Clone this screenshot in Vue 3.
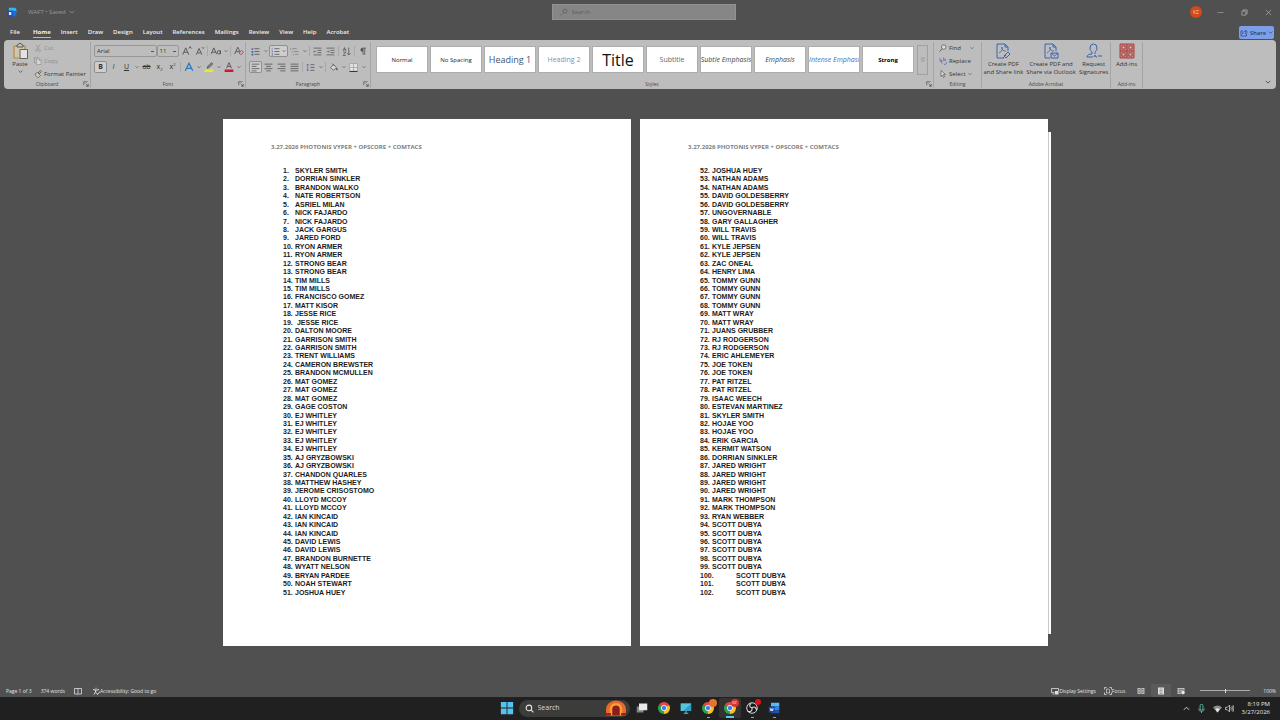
<template>
    <div class="desktop">
        <header class="title-bar">
            <div class="title-left">
                <Icon name="word" :size="10" />
                <span>WAFT • Saved</span>
                <Icon name="caret" :size="6" />
            </div>
            <label class="title-search">
                <Icon name="search" :size="8" />
                <input type="text" placeholder="Search" aria-label="Search document" />
            </label>
            <div class="title-right">
                <span class="avatar">KZ</span>
                <button v-for="w in ['minimize', 'restore', 'close']" :key="w" class="window-button" :aria-label="w">
                    <Icon :name="w" :size="7" />
                </button>
            </div>
        </header>

        <nav class="tabs">
            <a v-for="tab in tabs" :key="tab" href="#" :class="{ active: tab === 'Home' }">{{ tab }}</a>
            <button class="share"><Icon name="share" :size="8" />Share<Icon name="caret" :size="5" /></button>
        </nav>

        <section class="ribbon">
            <div class="group clipboard">
                <div class="group-body">
                    <button class="big paste">
                        <Icon name="paste" :size="16" />
                        <span>Paste</span>
                        <Icon name="caret" :size="5" />
                    </button>
                    <div class="stack">
                        <button class="line disabled"><Icon name="cut" :size="8" />Cut</button>
                        <button class="line disabled"><Icon name="copy" :size="8" />Copy</button>
                        <button class="line"><Icon name="painter" :size="8" />Format Painter</button>
                    </div>
                </div>
                <div class="group-label">Clipboard<Icon name="launcher" :size="6" /></div>
            </div>

            <div class="group font">
                <div class="group-body tool-rows">
                    <div class="tool-row">
                        <select class="font-name" aria-label="Font"><option>Arial</option></select>
                        <select class="font-size" aria-label="Font size"><option>11</option></select>
                        <component :is="t === '|' ? 'i' : 'button'" v-for="(t, i) in fontRow" :key="i" :class="toolClass(t)">
                            <Icon v-if="t !== '|'" :name="t" :size="t === 'caret' ? 4 : 10" />
                        </component>
                    </div>
                    <div class="tool-row">
                        <component :is="t === '|' ? 'i' : 'button'" v-for="(t, i) in formatRow" :key="i" :class="toolClass(t)">
                            <b v-if="t === 'B'">B</b>
                            <em v-else-if="t === 'I'">I</em>
                            <u v-else-if="t === 'U'">U</u>
                            <s v-else-if="t === 'ab'">ab</s>
                            <span v-else-if="t === 'sub'">x<sub>2</sub></span>
                            <span v-else-if="t === 'sup'">x<sup>2</sup></span>
                            <Icon v-else-if="t !== '|'" :name="t" :size="t === 'caret' ? 4 : 10" />
                        </component>
                    </div>
                </div>
                <div class="group-label">Font<Icon name="launcher" :size="6" /></div>
            </div>

            <div class="group paragraph">
                <div class="group-body tool-rows">
                    <div v-for="(row, r) in paragraphRows" :key="r" class="tool-row">
                        <component :is="t === '|' ? 'i' : 'button'" v-for="(t, i) in row" :key="i" :class="toolClass(t)">
                            <Icon v-if="t !== '|'" :name="t" :size="t === 'caret' ? 4 : 9" />
                            <Icon v-if="t === 'numbers'" name="caret" :size="4" />
                        </component>
                    </div>
                </div>
                <div class="group-label">Paragraph<Icon name="launcher" :size="6" /></div>
            </div>

            <div class="group styles">
                <div class="group-body gallery">
                    <button v-for="s in styles" :key="s.name" class="tile" :class="s.kind">{{ s.name }}</button>
                    <button class="more" aria-label="More styles"><Icon name="more" :size="6" /></button>
                </div>
                <div class="group-label">Styles<Icon name="launcher" :size="6" /></div>
            </div>

            <div class="group editing">
                <div class="group-body">
                    <div class="stack">
                        <button class="line"><Icon name="find" :size="8" />Find<Icon class="far" name="caret" :size="4" /></button>
                        <button class="line"><Icon name="replace" :size="8" />Replace</button>
                        <button class="line"><Icon name="select" :size="8" />Select<Icon name="caret" :size="4" /></button>
                    </div>
                </div>
                <div class="group-label">Editing</div>
            </div>

            <div class="group acrobat">
                <div class="group-body">
                    <button class="big"><Icon name="pdfLink" :size="16" /><span>Create PDF<br />and Share link</span></button>
                    <button class="big"><Icon name="pdfMail" :size="16" /><span>Create PDF and<br />Share via Outlook</span></button>
                    <button class="big"><Icon name="sign" :size="16" /><span>Request<br />Signatures</span></button>
                </div>
                <div class="group-label">Adobe Acrobat</div>
            </div>

            <div class="group addins">
                <div class="group-body">
                    <button class="big"><Icon name="addins" :size="16" /><span>Add-ins</span></button>
                </div>
                <div class="group-label">Add-ins</div>
            </div>
            <button class="collapse" aria-label="Collapse ribbon"><Icon name="caret" :size="6" /></button>
        </section>

        <main class="canvas">
            <article v-for="page in pages" :key="page.start" class="page">
                <h1>3.27.2026 PHOTONIS VYPER + OPSCORE + COMTACS</h1>
                <ol>
                    <li v-for="(name, i) in page.names" :key="i">
                        <span class="number" :class="{ wide: page.start + i > 99 }">{{ page.start + i }}.</span>
                        <span>{{ name }}</span>
                    </li>
                </ol>
            </article>
            <div class="page-edge"></div>
        </main>

        <footer class="status-bar">
            <span class="page-count">Page 1 of 3</span>
            <span class="word-count">374 words</span>
            <Icon class="book" name="book" :size="8" />
            <Icon name="access" :size="8" />
            <span>Accessibility: Good to go</span>
            <div class="status-right">
                <button><Icon name="display" :size="8" />Display Settings</button>
                <button class="focus"><Icon name="focus" :size="8" />Focus</button>
                <button class="view" aria-label="Read mode"><Icon name="readView" :size="8" /></button>
                <button class="view current" aria-label="Print layout"><Icon name="printView" :size="8" /></button>
                <button class="view" aria-label="Web layout"><Icon name="webView" :size="8" /></button>
                <input type="range" min="0" max="100" value="50" aria-label="Zoom" />
                <span class="zoom">100%</span>
            </div>
        </footer>

        <div class="taskbar">
            <div class="task-center">
                <button aria-label="Start"><Icon name="windows" :size="14" /></button>
                <label class="task-search">
                    <Icon name="searchWhite" :size="9" />
                    <input type="text" placeholder="Search" aria-label="Search Windows" />
                    <Icon name="arch" :size="20" />
                </label>
                <button v-for="app in apps" :key="app.id" :class="[app.state]" :aria-label="app.id">
                    <Icon :name="app.icon" :size="12" />
                    <span v-if="app.badge !== undefined" class="badge" :class="app.id">{{ app.badge }}</span>
                </button>
            </div>
            <div class="tray">
                <Icon name="up" :size="7" />
                <Icon class="mic" name="mic" :size="9" />
                <Icon name="wifi" :size="9" />
                <Icon name="volume" :size="9" />
                <time>8:19 PM<br />3/27/2026</time>
            </div>
        </div>
    </div>
</template>

<script setup>
import { h } from 'vue';

// every icon is a list of [path, stroke, fill, stroke width] on a 16 unit grid
const ink = '#484848';
const blue = '#3c62ad';
const white = '#dedede';
const chrome = [
    ['M8 8 L1.1 4 A8 8 0 0 1 14.9 4 Z', null, '#e8453c'],
    ['M8 8 L14.9 4 A8 8 0 0 1 8 16 Z', null, '#fbc116'],
    ['M8 8 L8 16 A8 8 0 0 1 1.1 4 Z', null, '#2ea24c'],
    ['M4.4 8a3.6 3.6 0 1 0 7.2 0a3.6 3.6 0 1 0 -7.2 0', '#f1f1f1', '#3f7fe8', 1.2]
];
const icons = {
    word: [
        ['M3 1h10l2 2v5H3z', null, '#35b6f2'],
        ['M5 6h10v6l-3 3H5z', null, '#1c6fe0'],
        ['M1 6h8v9H1z', null, '#1247b5'],
        ['M3 8h4v5H3z', null, '#dfe9fb']
    ],
    caret: [['M2 5l6 6l6-6', 'currentColor', null, 2]],
    search: [['M6 6a4 4 0 1 1 8 0a4 4 0 1 1-8 0M7 9l-6 6', '#565656', null, 1.3]],
    searchWhite: [['M2 7a5 5 0 1 1 10 0a5 5 0 1 1-10 0M11 11l4 4', '#e8e8e8', null, 1.8]],
    find: [['M5 6a4.5 4.5 0 1 1 9 0a4.5 4.5 0 1 1-9 0', ink, '#dddddd', 1.3], ['M6 10l-5 5', ink, null, 1.5]],
    minimize: [['M1 8h14', '#a8a8a8', null, 1.4]],
    restore: [['M2 5h9v9H2zM5 5V2h9v9h-3', '#b5b5b5', null, 1.6]],
    close: [['M2 2l12 12M14 2L2 14', '#b5b5b5', null, 1.5]],
    share: [['M6 4H2v10h11v-4M5 10c0-4 3-5 6-5V2l4 4l-4 4V7', '#28406f', null, 1.4]],
    paste: [
        ['M2 3h11v12H2z', '#b78a3a', '#d0c6ad', 1.2],
        ['M5 2h1l1-1.5h2L10 2h1v2H5z', '#5a5a5a', '#c4c4c4', 1],
        ['M8 6.5h7.5v9H8z', '#626262', '#e2e2e2', 1]
    ],
    cut: [['M4 1l6 10M12 1L6 11M3 13a2 2 0 1 1 4 0a2 2 0 1 1-4 0M9 13a2 2 0 1 1 4 0a2 2 0 1 1-4 0', '#909090', null, 1.2]],
    copy: [['M5 12H1V1h7v3', '#8d8d8d', null, 1.2], ['M5 4h6l3 3v8H5zM11 4v3h3', '#8d8d8d', '#d4d4d4', 1.2]],
    painter: [['M7 5l6 6l-4 4c-3 0-6-3-7-7z', ink, '#d1c7ad', 1.2], ['M8 6l5-5l2 2l-5 5', ink, null, 1.4]],
    launcher: [['M2 11V2h10M7 7l7 7M14 8v6H8', '#3b3b3b', null, 1.6]],
    more: [['M3 3h10M3 7l5 5l5-5', '#6c6c6c', null, 1.4]],
    growA: [['M1 14L6 3l5 11M3 10h6M11 4l2-3l2 3', ink, null, 1.3]],
    shrinkA: [['M2 14L6.500 4l4.500 10M4 11h5M11 2l2 2l2-2', ink, null, 1.3]],
    caseA: [['M0 13L4.500 3L9 13M2 10h5M15 7v6M15 10a2.500 2.700 0 1 0-5 0a2.500 2.700 0 1 0 5 0', ink, null, 1.3]],
    clear: [['M1 13L6 2l4 8M3 9h5', ink, null, 1.3], ['M8 11l4-4l3 3l-4 4z', '#9b3c62', '#d3aebb', 1.4]],
    effects: [['M2 14L8 2l6 12M5 10h6', '#2878be', null, 2]],
    highlight: [['M1 12h14v4H1z', null, '#e4ee1f'], ['M5 10l1-3l6-6l2 2l-6 6z', ink, '#8b8b8b', 1.2]],
    fontColor: [['M1 12h14v4H1z', null, '#d2172d'], ['M4 10l4-9l4 9M6 7h5', ink, null, 1.3]],
    bullets: [['M6 3h9M6 8h9M6 13h9', ink, null, 1.3], ['M1 2h3v3H1zM1 7h3v3H1zM1 12h3v3H1z', null, blue]],
    numbers: [['M6 3h9M6 8h9M6 13h9', ink, null, 1.3], ['M2 1v4M1 7h2v2H1M1 12h2v3H1', blue, null, 1]],
    levels: [['M4 3h8M7 8h8M9 13h6', '#777777', null, 1.3], ['M1 2v3M4 7v3M6 12v3', '#6479a8', null, 1]],
    outdent: [['M1 2h14M8 6h7M8 10h7M1 14h14', ink, null, 1.2], ['M6 8H1M3 6L1 8l2 2', blue, null, 1]],
    indent: [['M1 2h14M8 6h7M8 10h7M1 14h14', ink, null, 1.2], ['M1 8h5M4 6l2 2l-2 2', blue, null, 1]],
    sort: [['M2 7l2.500-6L7 7M3 5h3M2 9h5l-5 6h5', ink, null, 1.2], ['M12 1v13M9 11l3 3l3-3', ink, null, 1.3]],
    pilcrow: [['M8 8a3 3 0 0 1 0-6z', ink, ink, 1], ['M8 2h6M9 2v12M12 2v12', ink, null, 1.3]],
    alignLeft: [['M1 2h14M1 6h9M1 10h14M1 14h9', ink, null, 1.3]],
    alignCenter: [['M1 2h14M4 6h8M1 10h14M4 14h8', ink, null, 1.3]],
    alignRight: [['M1 2h14M6 6h9M1 10h14M6 14h9', ink, null, 1.3]],
    justify: [['M1 2h14M1 6h14M1 10h14M1 14h14', ink, null, 1.3]],
    spacing: [['M8 3h7M8 8h7M8 13h7', ink, null, 1.3], ['M3 2v12M1 4l2-2l2 2M1 12l2 2l2-2', blue, null, 1.2]],
    bucket: [['M3 8l5-5l5 5l-5 5zM6 1l3 4', ink, '#d8d8d8', 1.3], ['M14 9l1 3h-2z', ink, ink, 1]],
    borders: [['M1 1h14v14H1zM8 1v14M1 8h14', '#8c8c8c', '#e2e2e2', 1], ['M1 15h14', '#222222', null, 1.6]],
    replace: [['M9 1v6h4V4H9M7 9a2 2 0 1 0 0 4', '#7b5ba1', null, 1.3], ['M2 2v6h4M4 6l2 2l-2 2M10 15c4 0 5-2 5-5', blue, null, 1.3]],
    select: [['M4 1v12l3-3l2 5l2-1l-2-5h4z', ink, '#dddddd', 1.2]],
    pdfLink: [
        ['M9 15H2V1h8l3 3v4M10 1v3h3', blue, null, 1],
        ['M4 10c3-2 4-4 3-6c-1 2 1 4 4 4', blue, null, 0.8],
        ['M9 13l4-4l2 2l-4 4zM8 15l3-3', blue, null, 1]
    ],
    pdfMail: [
        ['M7 15H2V1h8l3 3v4M10 1v3h3', blue, null, 1],
        ['M4 10c3-2 4-4 3-6c-1 2 1 4 4 4', blue, null, 0.8],
        ['M8 10h7v5H8zl3.500 3L15 10', blue, null, 1]
    ],
    sign: [['M4 5a3.500 4 0 1 1 7 0c0 2-1 3-2 4v2M6 9v2c-3 0-5 1-5 3h6M4 5c0 2 1 3 2 4M8 14l1-2l1 2h1M12 13h4', blue, null, 1]],
    addins: [['M1 1h14v14H1zM8 1v14M1 8h14', '#a7433f', '#bd8380', 1], ['M3 3h3v3H3zM10 3h3v3h-3zM3 10h3v3H3zM10 10h3v3h-3z', '#a7433f', '#dccaca', 1]],
    book: [['M8 3H1v11h6l1 1l1-1h6V3zM8 3v11', white, null, 1.6]],
    access: [['M7 2.500h2M2 5l5 1h3l4-1M7 6v4l-3 5M8 10h1M9 12l2 3l5-6', white, null, 2]],
    display: [['M1 3h14v5M1 3v8h6M3 14h4', white, null, 1.6], ['M8 8h7v7H8z', null, white]],
    focus: [['M1 5V1h4M11 1h4v4M15 11v4h-4M5 15H1v-4', white, null, 1.6], ['M5 4h4l2 2v6H5z', white, null, 1.4]],
    readView: [['M1 2h14v12H1z', null, '#bdbdbd'], ['M8 2v12M3 5h3M3 8h3M3 11h3M10 5h3M10 8h3M10 11h3', '#505050', null, 1.2]],
    printView: [['M2 1h12v14H2z', null, '#dddddd'], ['M5 4h6M5 7h6M5 10h6M5 13h6', '#777777', null, 1.2]],
    webView: [['M1 2h14v12H1z', null, '#bdbdbd'], ['M3 5h10M3 8h5M3 11h4', '#505050', null, 1.2], ['M8 11a4 4 0 1 1 8 0a4 4 0 1 1-8 0', '#505050', '#f0f0f0', 1]],
    windows: [['M1 1h6.500v6.500H1zM8.500 1H15v6.500H8.500zM1 8.500h6.500V15H1zM8.500 8.500H15V15H8.500z', null, '#55c3f0']],
    arch: [
        ['M0 14V9a8 7 0 0 1 16 0v5z', null, '#e9692c'],
        ['M3 14V9a5 5 0 0 1 10 0v5z', null, '#f6a13d'],
        ['M5 14V9a3 3 0 0 1 6 0v5z', null, '#8e1c19'],
        ['M0 12h4v2H0zM12 12h4v2h-4z', null, '#a91f1b']
    ],
    taskView: [['M1 6h9v8H1z', null, '#858585'], ['M4 2h11v9H4z', null, '#e9e9e9']],
    monitor: [['M1 2h14v10H1z', null, '#2f9fc7'], ['M1 2h14L4 12H1z', null, '#56c5dc'], ['M8 12v3M5 15h6', '#8dc6d5', null, 1.2]],
    chrome,
    obs: [
        ['M1 8a7 7 0 1 1 14 0a7 7 0 1 1-14 0', '#dcdcdc', '#191919', 1.3],
        ['M8 8c-4-1-4-5-1-6M8 8c3-3 6 0 6 3M8 8c1 4-3 6-6 4', '#dcdcdc', null, 1.5]
    ],
    wordApp: [
        ['M4 1h11v5H4z', null, '#58b9f4'],
        ['M4 6h11v5H4z', null, '#2e86e6'],
        ['M4 11h11v4H4z', null, '#1b54bd'],
        ['M1 6h8v8H1z', null, '#1746a8'],
        ['M3 8l1 4l1-3l1 3l1-4', '#ffffff', null, 1]
    ],
    up: [['M2 11l6-6l6 6', '#e8e8e8', null, 2]],
    mic: [['M5.500 3a2.500 2.500 0 0 1 5 0v5a2.500 2.500 0 0 1-5 0zM3 8a5 5 0 0 0 10 0M8 13v3', '#61c9b6', null, 1.5]],
    wifi: [['M0 6a11 11 0 0 1 16 0L8 15z', null, '#8d8d8d'], ['M4 9.500a6 6 0 0 1 8 0L8 15z', null, '#e5e5e5']],
    volume: [['M1 6h3l4-4v12l-4-4H1z', '#e5e5e5', null, 1.3], ['M10 6q2 2 0 4M12 4q3 4 0 8M14 2q4 6 0 12', '#e5e5e5', null, 1.3]]
};

const Icon = (props) =>
    h(
        'svg',
        { viewBox: '0 0 16 16', width: props.size, height: props.size, 'aria-hidden': true },
        icons[props.name].map(([d, stroke, fill, width]) =>
            h('path', { d, stroke: stroke || 'none', fill: fill || 'none', 'stroke-width': width || 1 })
        )
    );
Icon.props = ['name', 'size'];

const tabs = ['File', 'Home', 'Insert', 'Draw', 'Design', 'Layout', 'References', 'Mailings', 'Review', 'View', 'Help', 'Acrobat'];

const fontRow = ['growA', 'shrinkA', '|', 'caseA', 'caret', '|', 'clear'];
const formatRow = ['B', 'I', 'U', 'caret', 'ab', 'sub', 'sup', '|', 'effects', 'caret', 'highlight', 'caret', 'fontColor', 'caret'];
const paragraphRows = [
    ['bullets', 'caret', 'numbers', 'levels', 'caret', '|', 'outdent', 'indent', '|', 'sort', '|', 'pilcrow'],
    ['alignLeft', 'alignCenter', 'alignRight', 'justify', '|', 'spacing', 'caret', '|', 'bucket', 'caret', 'borders', 'caret']
];

const toolClass = (t) => {
    if (t === '|') return 'divider';
    if (t === 'caret') return 'tool-caret';
    return ['tool', { pressed: ['B', 'numbers', 'alignLeft'].includes(t), split: t === 'numbers' }];
};

const styles = [
    { name: 'Normal', kind: 'plain' },
    { name: 'No Spacing', kind: 'plain' },
    { name: 'Heading 1', kind: 'heading-1' },
    { name: 'Heading 2', kind: 'heading-2' },
    { name: 'Title', kind: 'title' },
    { name: 'Subtitle', kind: 'subtitle' },
    { name: 'Subtle Emphasis', kind: 'emphasis' },
    { name: 'Emphasis', kind: 'emphasis' },
    { name: 'Intense Emphasis', kind: 'intense' },
    { name: 'Strong', kind: 'strong' }
];

const repeat = (name, times) => Array(times).fill(name);

const pages = [
    {
        start: 1,
        names: [
            'SKYLER SMITH', 'DORRIAN SINKLER', 'BRANDON WALKO', 'NATE ROBERTSON', 'ASRIEL MILAN',
            ...repeat('NICK FAJARDO', 2), 'JACK GARGUS', 'JARED FORD', ...repeat('RYON ARMER', 2),
            ...repeat('STRONG BEAR', 2), ...repeat('TIM MILLS', 2), 'FRANCISCO GOMEZ', 'MATT KISOR',
            'JESSE RICE', ' JESSE RICE', 'DALTON MOORE', ...repeat('GARRISON SMITH', 2), 'TRENT WILLIAMS',
            'CAMERON BREWSTER', 'BRANDON MCMULLEN', ...repeat('MAT GOMEZ', 3), 'GAGE COSTON',
            ...repeat('EJ WHITLEY', 5), ...repeat('AJ GRYZBOWSKI', 2), 'CHANDON QUARLES', 'MATTHEW HASHEY',
            'JEROME CRISOSTOMO', ...repeat('LLOYD MCCOY', 2), ...repeat('IAN KINCAID', 3),
            ...repeat('DAVID LEWIS', 2), 'BRANDON BURNETTE', 'WYATT NELSON', 'BRYAN PARDEE', 'NOAH STEWART',
            'JOSHUA HUEY'
        ]
    },
    {
        start: 52,
        names: [
            'JOSHUA HUEY', ...repeat('NATHAN ADAMS', 2), ...repeat('DAVID GOLDESBERRY', 2), 'UNGOVERNABLE',
            'GARY GALLAGHER', ...repeat('WILL TRAVIS', 2), ...repeat('KYLE JEPSEN', 2), 'ZAC ONEAL',
            'HENRY LIMA', ...repeat('TOMMY GUNN', 4), ...repeat('MATT WRAY', 2), 'JUANS GRUBBER',
            ...repeat('RJ RODGERSON', 2), 'ERIC AHLEMEYER', ...repeat('JOE TOKEN', 2), ...repeat('PAT RITZEL', 2),
            'ISAAC WEECH', 'ESTEVAN MARTINEZ', 'SKYLER SMITH', ...repeat('HOJAE YOO', 2), 'ERIK GARCIA',
            'KERMIT WATSON', 'DORRIAN SINKLER', ...repeat('JARED WRIGHT', 4), ...repeat('MARK THOMPSON', 2),
            'RYAN WEBBER', ...repeat('SCOTT DUBYA', 9)
        ]
    }
];

const apps = [
    { id: 'task-view', icon: 'taskView' },
    { id: 'chrome', icon: 'chrome' },
    { id: 'remote', icon: 'monitor' },
    { id: 'chrome-work', icon: 'chrome', badge: '', state: 'open' },
    { id: 'chrome-kz', icon: 'chrome', badge: 'KZ', state: 'focused' },
    { id: 'obs', icon: 'obs', badge: '', state: 'open' },
    { id: 'word', icon: 'wordApp', state: 'open' }
];
</script>

<style>
body {
    background: #505050;
}
</style>

<style scoped>
.desktop {
    display: flex;
    flex-direction: column;
    min-height: 100vh;
    background: #505050;
    font: 6px/8px "Open Sans", "Noto Sans", sans-serif;
    color: #333333;
}

.desktop * {
    box-sizing: border-box;
}

button, input, select {
    margin: 0;
    padding: 0;
    border: 0;
    background: none;
    color: inherit;
    font: inherit;
    appearance: none;
}

button {
    display: flex;
    align-items: center;
    justify-content: center;
    white-space: nowrap;
}

svg {
    flex: none;
}

.title-bar {
    display: grid;
    grid-template-columns: 1fr 184px 1fr;
    align-items: center;
    height: 24px;
    padding-left: 7px;
    color: #999999;
}

.title-left {
    display: flex;
    align-items: center;
    gap: 3px;
}

.title-left span {
    margin-left: 8px;
}

.title-search {
    display: flex;
    align-items: center;
    gap: 4px;
    height: 16px;
    padding: 0 7px;
    border: 1px solid #929292;
    background: #868686;
}

.title-search input {
    flex: 1;
    min-width: 0;
}

.title-search input::placeholder {
    color: #5c5c5c;
    opacity: 1;
}

.title-right {
    display: flex;
    align-items: center;
    justify-content: flex-end;
}

.avatar {
    width: 12px;
    margin-right: 6px;
    border-radius: 50%;
    background: #d04a1a;
    color: #f3c9b8;
    font-size: 5px;
    line-height: 12px;
    text-align: center;
}

.window-button {
    width: 24px;
    height: 16px;
}

.tabs {
    display: flex;
    align-items: center;
    gap: 10px;
    height: 16px;
    padding: 1px 6px 0 10px;
    color: #eeeeee;
    font-weight: 600;
}

.tabs a {
    color: inherit;
    text-decoration: none;
    line-height: 9px;
    border-bottom: 1px solid transparent;
}

.tabs .active {
    margin-left: 3px;
    border-color: #a9bbe6;
    font-weight: bold;
}

.share {
    gap: 2px;
    width: 35px;
    height: 13px;
    margin-left: auto;
    border-radius: 2px;
    background: #7d9fe8;
    color: #28406f;
}

.ribbon {
    display: flex;
    height: 49px;
    margin: 0 4px;
    border-radius: 4px;
    background: #bdbdbd;
}

.group {
    display: flex;
    flex-direction: column;
    flex: none;
    margin: 2px 0 1px;
    border-right: 1px solid #a5a5a5;
}

.group-body {
    display: flex;
    flex: 1;
}

.group-label {
    position: relative;
    color: #484848;
    font-size: 5px;
    text-align: center;
}

.group-label svg {
    position: absolute;
    right: 1px;
    top: 1px;
}

.clipboard {
    width: 87px;
}

.font {
    width: 155px;
}

.paragraph {
    width: 125px;
}

.styles {
    width: 563px;
}

.editing {
    width: 48px;
}

.acrobat {
    width: 129px;
}

.addins {
    width: 32px;
}

.big {
    flex-direction: column;
    justify-content: flex-start;
    gap: 1px;
    padding-top: 1px;
    text-align: center;
}

.acrobat .group-body {
    justify-content: space-around;
}

.addins .group-body {
    justify-content: center;
}

.paste {
    width: 28px;
    margin-left: 2px;
}

.stack {
    display: flex;
    flex-direction: column;
}

.line {
    flex: 1;
    justify-content: flex-start;
    gap: 2px;
}

.far {
    margin-left: 7px;
}

.editing .stack {
    margin-left: 5px;
}

.disabled {
    color: #8c8c8c;
}

.tool-rows {
    flex-direction: column;
    padding: 1px 0 0 3px;
}

.tool-row {
    display: flex;
    align-items: center;
    height: 16px;
}

.tool {
    width: 13px;
    height: 12px;
    font-size: 7px;
}

.tool sub, .tool sup {
    font-size: 4px;
    line-height: 1px;
}

.tool-caret {
    width: 7px;
    height: 12px;
}

.pressed {
    border: 1px solid #8f8f8f;
    border-radius: 2px;
    background: #cecece;
}

.split {
    width: 19px;
    gap: 2px;
}

.divider {
    width: 1px;
    height: 10px;
    margin: 0 1px;
    background: #a9a9a9;
}

.font-name, .font-size {
    height: 12px;
    padding: 0 2px;
    border: 1px solid #979797;
    border-radius: 2px;
    background: linear-gradient(#555555, #555555) no-repeat right 2px center / 3px 1px;
}

.font-name {
    width: 63px;
}

.font-size {
    width: 23px;
    margin-right: 1px;
}

.gallery {
    align-items: center;
    gap: 4px;
    padding: 0 0 3px 6px;
}

.tile {
    width: 50px;
    height: 25px;
    overflow: hidden;
    outline: 1px solid #adadad;
    background: #ffffff;
    color: #222222;
}

.heading-1 {
    color: #44546f;
    font-size: 9px;
}

.heading-2 {
    color: #8290ad;
    font-size: 7px;
}

.title {
    font-size: 16px;
    color: #111111;
}

.subtitle {
    color: #666666;
    font-size: 7px;
}

.emphasis, .intense {
    color: #444444;
    font-size: 7px;
    font-style: italic;
}

.intense {
    justify-content: flex-start;
    color: #4a6fb5;
}

.strong {
    color: #000000;
    font-weight: bold;
}

.more {
    width: 11px;
    height: 30px;
    border: 1px solid #a0a0a0;
}

.collapse {
    width: 12px;
    height: 12px;
    margin: auto 2px 1px auto;
}

.canvas {
    display: flex;
    flex: 1;
    justify-content: center;
    align-items: flex-start;
    padding: 30px 6px 30px 0;
}

.page {
    width: 408px;
    min-height: 527px;
    margin-right: 9px;
    padding: 23px 48px 40px;
    background: #ffffff;
}

.page:nth-child(2) {
    margin-right: 0;
}

.page-edge {
    width: 3px;
    height: 502px;
    margin-top: 13px;
    border-left: 1px solid #c8c8c8;
    background: #ffffff;
}

.page h1 {
    margin: 0;
    color: #808080;
    font-weight: bold;
    font-size: 6px;
    line-height: 10px;
}

.page ol {
    display: grid;
    grid-template-rows: repeat(51, 1fr);
    height: 430px;
    margin: 15px 0 0 12px;
    padding: 0;
    list-style: none;
    color: #1c1c1c;
    font: bold 7px/8px "Liberation Sans", Arial, sans-serif;
}

.page li {
    display: flex;
    white-space: pre;
}

.number {
    width: 12px;
}

.wide {
    width: 36px;
}

.status-bar {
    display: flex;
    align-items: center;
    height: 13px;
    padding: 0 4px 0 6px;
    color: #e2e2e2;
    font-size: 5px;
}

.word-count {
    margin-left: 9px;
}

.book {
    margin: 0 10px 0 9px;
}

.status-right {
    display: flex;
    align-items: center;
    margin-left: auto;
}

.focus {
    margin: 0 6px 0 8px;
}

.view {
    width: 20px;
    height: 13px;
}

.current {
    background: #5a5a5a;
}

.status-right input {
    width: 50px;
    height: 8px;
    margin: 0 13px 0 9px;
    background: linear-gradient(#aaaaaa, #aaaaaa) no-repeat center / 100% 1px;
}

.status-right input::-webkit-slider-thumb {
    appearance: none;
    width: 1px;
    height: 4px;
    background: #dddddd;
}

.taskbar {
    display: grid;
    grid-template-columns: 1fr auto 1fr;
    align-items: center;
    height: 23px;
    padding-bottom: 1px;
    background: #202020;
    color: #e8e8e8;
}

.task-center {
    display: flex;
    grid-column: 2;
    align-items: center;
}

.task-center button {
    position: relative;
    width: 22px;
    height: 20px;
}

.task-search {
    display: flex;
    align-items: center;
    gap: 4px;
    width: 111px;
    height: 17px;
    margin: 0 1px;
    padding: 0 4px 0 6px;
    border-radius: 9px;
    background: #3c3c3b;
    font-size: 7px;
}

.task-search input {
    flex: 1;
    min-width: 0;
}

.task-search input::placeholder {
    color: #d8d8d8;
    opacity: 1;
}

.open::after, .focused::after {
    content: "";
    position: absolute;
    bottom: 0;
    left: 10px;
    width: 3px;
    height: 1px;
    background: #a0a0a0;
}

.focused {
    border-radius: 2px;
    background: #333333;
}

.focused::after {
    left: 7px;
    width: 8px;
    height: 2px;
    background: #55c8e6;
}

.badge {
    position: absolute;
    top: 1px;
    right: 2px;
    width: 8px;
    height: 8px;
    border-radius: 50%;
    background: #e5752c;
    font-size: 4px;
}

.chrome-kz {
    background: #d4382c;
}

.obs {
    width: 6px;
    height: 6px;
    background: #e3101a;
}

.tray {
    display: flex;
    align-items: center;
    justify-content: flex-end;
    gap: 3px;
    padding-right: 10px;
}

.mic {
    margin: 0 4px;
}

.tray time {
    margin-left: 5px;
    text-align: right;
}
</style>
